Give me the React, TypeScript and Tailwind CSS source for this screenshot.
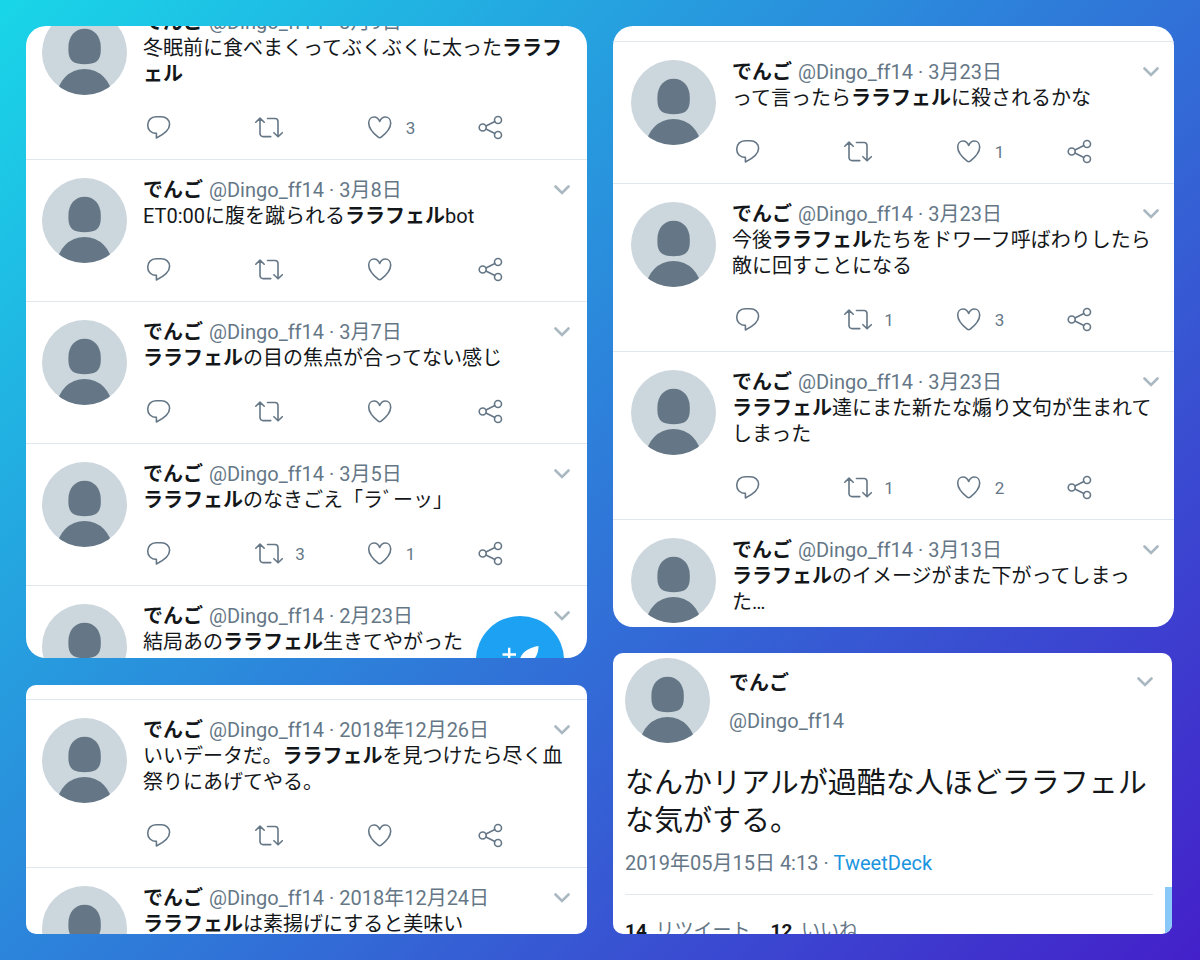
import React from "react";
import { clsx } from "clsx";

interface Tweet {
  date: string;
  body: React.ReactNode;
  retweets?: number;
  likes?: number;
}

const LALA = <b className="font-bold">ララフェル</b>;

const marchTweets: Tweet[] = [
  { date: "3月9日", body: <>冬眠前に食べまくってぶくぶくに太った{LALA}</>, likes: 3 },
  { date: "3月8日", body: <>ET0:00に腹を蹴られる{LALA}bot</> },
  { date: "3月7日", body: <>{LALA}の目の焦点が合ってない感じ</> },
  { date: "3月5日", body: <>{LALA}のなきごえ「ラﾞーッ」</>, retweets: 3, likes: 1 },
  { date: "2月23日", body: <>結局あの{LALA}生きてやがった</> },
];

const decemberTweets: Tweet[] = [
  { date: "2018年12月26日", body: <>いいデータだ。{LALA}を見つけたら尽く血祭りにあげてやる。</> },
  { date: "2018年12月24日", body: <>{LALA}は素揚げにすると美味い</> },
];

const lateMarchTweets: Tweet[] = [
  { date: "3月23日", body: <>って言ったら{LALA}に殺されるかな</>, likes: 1 },
  { date: "3月23日", body: <>今後{LALA}たちをドワーフ呼ばわりしたら敵に回すことになる</>, retweets: 1, likes: 3 },
  { date: "3月23日", body: <>{LALA}達にまた新たな煽り文句が生まれてしまった</>, retweets: 1, likes: 2 },
  { date: "3月13日", body: <>{LALA}のイメージがまた下がってしまった…</> },
];

function Avatar({ className }: { className?: string }) {
  return (
    <div className={clsx("size-[85px] shrink-0 overflow-hidden rounded-full bg-[#ccd6dd]", className)}>
      <svg viewBox="0 0 85 85" className="size-full fill-[#657786]" aria-hidden="true">
        <path d="M42.6 18.8C52 18.8 58.8 26 58.8 37.5V40C58.8 51.5 53 54.2 42.6 54.2S26.4 51.5 26.4 40V37.5C26.4 26 33.2 18.8 42.6 18.8z" />
        <circle cx="42.5" cy="86.3" r="27.3" />
      </svg>
    </div>
  );
}

function MenuButton({ className }: { className?: string }) {
  return (
    <button type="button" aria-label="メニュー" className={clsx("shrink-0 cursor-pointer", className)}>
      <svg width="16" height="10" viewBox="0 0 16 10" fill="none" stroke="#aab8c2" strokeWidth="2.6" strokeLinecap="round">
        <path d="M1.5 1.5L8 8l6.5-6.5" />
      </svg>
    </button>
  );
}

interface ActionProps {
  label: string;
  count?: number;
  children: React.ReactNode;
}

function Action({ label, count, children }: ActionProps) {
  return (
    <button type="button" aria-label={label} className="flex h-7 w-7 cursor-pointer items-center gap-3">
      <svg
        viewBox="0 0 28 28"
        className="size-7 shrink-0"
        fill="none"
        stroke="currentColor"
        strokeWidth="1.6"
        strokeLinecap="round"
        strokeLinejoin="round"
      >
        {children}
      </svg>
      {count !== undefined && <span className="text-[17px] leading-7">{count}</span>}
    </button>
  );
}

function TweetRow({ tweet, className }: { tweet: Tweet; className?: string }) {
  return (
    <article className={clsx("flex gap-4 border-t border-[#e1e8ed] py-[17px]", className)}>
      <Avatar className="mt-px" />
      <div className="min-w-0 flex-1">
        <header className="flex items-center justify-between">
          <div className="flex gap-1.5 whitespace-nowrap">
            <span className="font-bold">でんご</span>
            <span className="text-[#657786]">@Dingo_ff14 · {tweet.date}</span>
          </div>
          <MenuButton />
        </header>
        <p>{tweet.body}</p>
        {/* counts hang to the right of their icons, so the icons stay evenly spaced */}
        <div className="mt-[27px] ml-0.5 flex max-w-[359px] justify-between text-[#657786]">
          <Action label="返信">
            <path d="M11 2.7h5.3c4.8 0 8.3 3.3 8.3 7.6 0 5.6-5 9.700-13.200 13.700v-4.600C6 19.400 2.700 15.700 2.700 11.100 2.700 6.200 6.200 2.700 11 2.700z" />
          </Action>
          <Action label="リツイート" count={tweet.retweets}>
            <path d="M.8 8.200L5 4.100l4.200 4.100M5 4.300v15.300a3 3 0 0 0 3 3h7.800M12.500 4.500H20a3 3 0 0 1 3 3v15M18.900 18.700l4.200 4.100 4.200-4.100" />
          </Action>
          <Action label="いいね" count={tweet.likes}>
            <path d="M13.700 7.400C12.500 4.600 10.300 3 8.100 3 5 3 2.700 5.500 2.700 9c0 5.500 5.500 11 9.500 14.200 1 .8 2 .8 3 0 4-3.200 9.500-8.700 9.500-14.200 0-3.500-2.300-6-5.400-6-2.200 0-4.400 1.600-5.600 4.400z" />
          </Action>
          <Action label="共有">
            <circle cx="6.700" cy="13.500" r="3.500" />
            <circle cx="22" cy="6" r="3.500" />
            <circle cx="22" cy="21" r="3.500" />
            <path d="M9.900 12l9-4.500M9.900 15l9 4.500" />
          </Action>
        </div>
      </div>
    </article>
  );
}

function ComposeButton() {
  return (
    <button
      type="button"
      aria-label="ツイートする"
      className="absolute top-[590px] right-[23px] size-[88px] cursor-pointer rounded-full bg-[#1da1f2] shadow-lg"
    >
      <svg viewBox="0 0 88 88" className="size-full" aria-hidden="true">
        <path d="M26.500 38.500h13.500M33.200 31.800v13.500" stroke="#fff" strokeWidth="2.400" />
        <path d="M62.500 30C54 31.500 47.500 34.500 44 42.500L38 58h3l4-9c10-.5 17.500-7 17.500-19z" fill="#fff" />
      </svg>
    </button>
  );
}

function TweetDetail() {
  return (
    <article className="pt-[5px] pr-[19px] pl-3">
      <header className="flex items-start">
        <Avatar />
        <div className="ml-[19px] flex flex-1 flex-col gap-3 pt-3">
          <span className="font-bold">でんご</span>
          <span className="text-[#657786]">@Dingo_ff14</span>
        </div>
        <MenuButton className="mt-[19px]" />
      </header>
      <p className="mt-[21px] text-[29px] leading-[38px]">なんかリアルが過酷な人ほどララフェルな気がする。</p>
      <p className="mt-2.5 text-[#657786]">
        2019年05月15日 4:13 ·{" "}
        <a href="#" className="text-[#1b95e0]">
          TweetDeck
        </a>
      </p>
      <div className="mt-[18px] flex gap-5 border-t border-[#e1e8ed] pt-[23px] text-[19px] text-[#657786]">
        <span>
          <b className="mr-1 font-bold text-[#14171a]">14</b> リツイート
        </span>
        <span>
          <b className="mr-1 font-bold text-[#14171a]">12</b> いいね
        </span>
      </div>
    </article>
  );
}

export default function App() {
  return (
    <main
      lang="ja"
      className="grid min-h-screen grid-cols-2 gap-[26px] bg-[linear-gradient(135deg,#19d6e8,#4420ca)] p-[26px] font-['Roboto','Noto_Sans_CJK_JP',sans-serif] text-[20px] leading-[26px] text-[#14171a]"
    >
      <div className="flex min-w-0 flex-col gap-[27px]">
        <section className="relative h-[632px] overflow-hidden rounded-[20px] bg-white">
          {/* list is scrolled part of the way past its first tweet */}
          <div className="-mt-[35px]">
            {marchTweets.map((tweet, i) => (
              <TweetRow key={i} tweet={tweet} className="pr-[17px] pl-4" />
            ))}
          </div>
          <ComposeButton />
        </section>
        <section className="h-[249px] overflow-hidden rounded-[10px] bg-white pt-3.5">
          {decemberTweets.map((tweet, i) => (
            <TweetRow key={i} tweet={tweet} className="pr-[17px] pl-4" />
          ))}
        </section>
      </div>

      <div className="flex min-w-0 flex-col gap-[26px]">
        <section className="h-[601px] overflow-hidden rounded-[20px] bg-white pt-[15px]">
          {lateMarchTweets.map((tweet, i) => (
            <TweetRow key={i} tweet={tweet} className="pr-[15px] pl-[18px]" />
          ))}
        </section>
        <section className="relative mr-0.5 h-[281px] overflow-hidden rounded-[10px] bg-white">
          <TweetDetail />
          <div className="absolute right-0 bottom-0 h-[47px] w-[7px] bg-[#88c9f9]" />
        </section>
      </div>
    </main>
  );
}
